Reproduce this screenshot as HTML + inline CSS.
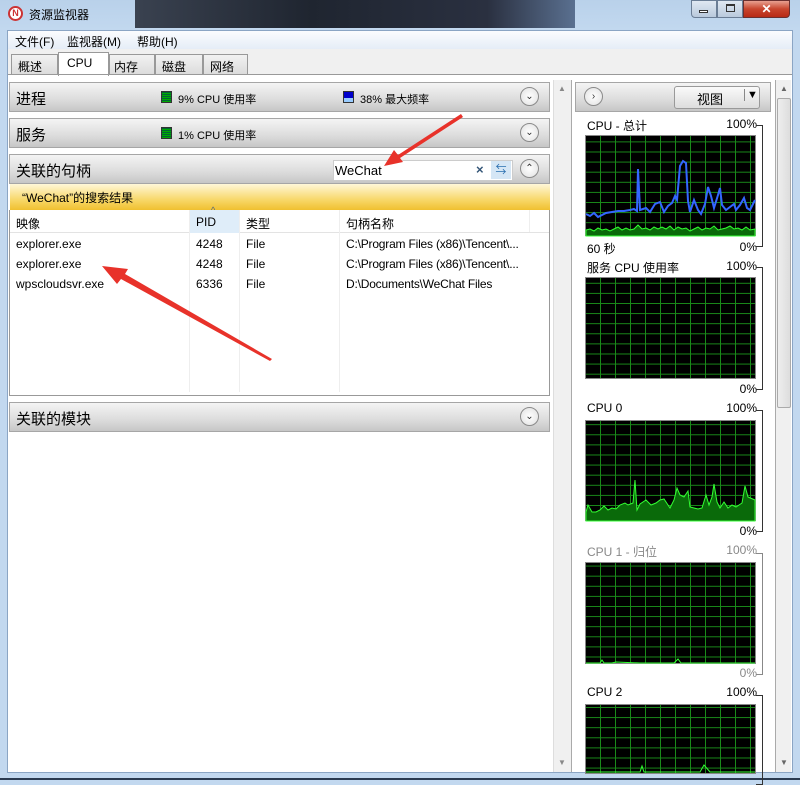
<!DOCTYPE html>
<html><head><meta charset="utf-8"><style>
*{box-sizing:border-box;margin:0;padding:0}
body{width:800px;height:780px;position:relative;overflow:hidden;background:#c2d8ef;font-family:"Liberation Sans","Noto Sans CJK SC",sans-serif;font-size:12px;color:#000}
.a{position:absolute}
.hdr{position:absolute;background:linear-gradient(#f4f4f4,#dcdcdc 60%,#c6c6c6);border:1px solid #a6a6a6;font-size:15px}
.hdr .t{position:absolute;left:6px;top:5px}
.chev{position:absolute;width:19px;height:19px;border-radius:50%;border:1px solid #8a8a8a;background:radial-gradient(#fff,#e0e0e0);font-size:10px;text-align:center;line-height:17px;color:#333}
.brk{position:absolute;left:756px;width:7px;border:1px solid #333;border-left:none}
</style></head><body>
<div class="a" style="left:0;top:0;width:800px;height:30px;background:linear-gradient(#b9d1ea,#c2d8ef)"></div>
<div class="a" style="left:135px;top:0;width:440px;height:28px;background:linear-gradient(90deg,#3a4250,#1f2530 40%,#2a3040 80%,#5a7090)"></div>
<div class="a" style="left:0;top:778px;width:800px;height:2px;background:#2a3a50"></div>
<div class="a" style="left:8px;top:6px;width:15px;height:15px;border-radius:50%;border:2px solid #c33;background:#fff;font-size:9px;text-align:center;line-height:11px;color:#c33;font-weight:bold">N</div>
<div class="a" style="left:29px;top:6px;font-size:12px">资源监视器</div>
<div class="a" style="left:691px;top:0;width:26px;height:18px;border:1px solid #6a7d95;border-radius:0 0 0 4px;background:linear-gradient(#dfe8f2,#b9c9dc)"></div>
<div class="a" style="left:699px;top:10px;width:9px;height:3px;border:1px solid #333;background:#fff"></div>
<div class="a" style="left:717px;top:0;width:26px;height:18px;border:1px solid #6a7d95;background:linear-gradient(#dfe8f2,#b9c9dc)"></div>
<div class="a" style="left:726px;top:4px;width:9px;height:8px;border:1px solid #333;border-top-width:2px"></div>
<div class="a" style="left:743px;top:0;width:47px;height:18px;border:1px solid #6a3030;border-radius:0 0 4px 0;background:linear-gradient(#e8a090,#c8452e 50%,#b82a15);color:#fff;font-weight:bold;text-align:center;font-size:12px;line-height:16px">✕</div>
<div class="a" style="left:7px;top:30px;width:786px;height:743px;background:#fff;border:1px solid #8ba5c4"></div>
<div class="a" style="left:8px;top:31px;width:784px;height:18px;background:linear-gradient(#fbfcfe,#e5edf7)"></div>
<div class="a" style="left:15px;top:33px">文件(F)</div>
<div class="a" style="left:67px;top:33px">监视器(M)</div>
<div class="a" style="left:137px;top:33px">帮助(H)</div>
<div class="a" style="left:8px;top:49px;width:784px;height:26px;background:#f0f0f0"></div>
<div class="a" style="left:11px;top:54px;width:47px;height:21px;border:1px solid #999;background:linear-gradient(#f2f2f2,#dcdcdc);padding:3px 6px">概述</div>
<div class="a" style="left:58px;top:52px;width:51px;height:24px;border:1px solid #999;border-bottom:none;background:#fff;padding:3px 8px">CPU</div>
<div class="a" style="left:109px;top:54px;width:46px;height:21px;border:1px solid #999;background:linear-gradient(#f2f2f2,#dcdcdc);padding:3px 4px">内存</div>
<div class="a" style="left:155px;top:54px;width:48px;height:21px;border:1px solid #999;background:linear-gradient(#f2f2f2,#dcdcdc);padding:3px 6px">磁盘</div>
<div class="a" style="left:203px;top:54px;width:45px;height:21px;border:1px solid #999;background:linear-gradient(#f2f2f2,#dcdcdc);padding:3px 6px">网络</div>
<div class="a" style="left:8px;top:74px;width:784px;height:1px;background:#999"></div>
<div class="hdr" style="left:9px;top:82px;width:541px;height:30px"><span class="t">进程</span>
<span class="a" style="left:151px;top:8px;width:11px;height:12px;background:repeating-linear-gradient(#063 0 1px,#0a0 1px 2px);border:1px solid #333"></span><span class="a" style="left:168px;top:8px;font-size:11px">9% CPU 使用率</span>
<span class="a" style="left:333px;top:8px;width:11px;height:12px;background:linear-gradient(#00c 60%,#9cf 60%);border:1px solid #333"></span><span class="a" style="left:350px;top:8px;font-size:11px">38% 最大频率</span>
<span class="chev" style="left:510px;top:4px">&#8964;</span></div>
<div class="hdr" style="left:9px;top:118px;width:541px;height:30px"><span class="t">服务</span>
<span class="a" style="left:151px;top:8px;width:11px;height:12px;background:repeating-linear-gradient(#063 0 1px,#0a0 1px 2px);border:1px solid #333"></span><span class="a" style="left:168px;top:8px;font-size:11px">1% CPU 使用率</span>
<span class="chev" style="left:510px;top:4px">&#8964;</span></div>
<div class="hdr" style="left:9px;top:154px;width:541px;height:30px"><span class="t">关联的句柄</span>
<span class="a" style="left:323px;top:5px;width:180px;height:21px;background:#fff;border:1px solid #ccc;font-size:13px;padding:2px 1px">WeChat</span>
<span class="a" style="left:466px;top:7px;color:#357;font-weight:bold;font-size:13px">×</span>
<span class="a" style="left:481px;top:6px;width:20px;height:18px;background:#d5e6f5;color:#2a6fb0;font-size:11px;text-align:center">⇆</span>
<span class="chev" style="left:510px;top:4px">&#8963;</span></div>
<div class="a" style="left:10px;top:184px;width:540px;height:26px;background:linear-gradient(#fff7d8,#f8d86a 60%,#f0c030);padding:5px 12px;font-size:12px">“WeChat”的搜索结果</div>
<div class="a" style="left:9px;top:210px;width:541px;height:186px;border:1px solid #999;border-top:none;background:#fff"></div>
<div class="a" style="left:10px;top:210px;width:539px;height:23px;background:#fff;border-bottom:1px solid #e3e3e3"></div>
<div class="a" style="left:189px;top:210px;width:50px;height:23px;background:#dfedf9"></div>
<div class="a" style="left:189px;top:210px;width:1px;height:182px;background:#eee"></div>
<div class="a" style="left:239px;top:210px;width:1px;height:182px;background:#eee"></div>
<div class="a" style="left:339px;top:210px;width:1px;height:182px;background:#eee"></div>
<div class="a" style="left:529px;top:210px;width:1px;height:22px;background:#eee"></div>
<div class="a" style="left:16px;top:215px">映像</div><div class="a" style="left:196px;top:215px">PID</div><div class="a" style="left:211px;top:205px;font-size:9px;color:#567">^</div><div class="a" style="left:246px;top:215px">类型</div><div class="a" style="left:346px;top:215px">句柄名称</div>
<div class="a" style="left:16px;top:234px;line-height:20px">explorer.exe<br>explorer.exe<br>wpscloudsvr.exe</div>
<div class="a" style="left:196px;top:234px;line-height:20px">4248<br>4248<br>6336</div>
<div class="a" style="left:246px;top:234px;line-height:20px">File<br>File<br>File</div>
<div class="a" style="left:346px;top:234px;line-height:20px;letter-spacing:-0.2px">C:\Program Files (x86)\Tencent\...<br>C:\Program Files (x86)\Tencent\...<br>D:\Documents\WeChat Files</div>
<div class="hdr" style="left:9px;top:402px;width:541px;height:30px"><span class="t">关联的模块</span><span class="chev" style="left:510px;top:4px">&#8964;</span></div>
<div class="a" style="left:553px;top:80px;width:18px;height:692px;background:#f0f0f0;border-left:1px solid #ddd"></div>
<div class="a" style="left:558px;top:84px;font-size:8px;color:#888">▲</div>
<div class="a" style="left:558px;top:758px;font-size:8px;color:#888">▼</div>
<div class="a" style="left:571px;top:80px;width:1px;height:692px;background:#aaa"></div>
<div class="hdr" style="left:575px;top:82px;width:196px;height:30px">
<span class="chev" style="left:8px;top:4px">›</span>
<span class="a" style="left:98px;top:3px;width:86px;height:23px;border:1px solid #999;border-radius:3px;background:linear-gradient(#fafafa,#ddd);font-size:13px;padding:2px 0 0 22px">视图</span>
<span class="a" style="left:168px;top:6px;font-size:11px;border-left:1px solid #888;padding-left:2px">▼</span></div>
<div class="a" style="left:775px;top:80px;width:1px;height:692px;background:#aaa"></div>
<div class="a" style="left:776px;top:80px;width:15px;height:692px;background:#f0f0f0"></div>
<div class="a" style="left:777px;top:98px;width:14px;height:310px;background:linear-gradient(90deg,#eee,#ddd);border:1px solid #aaa;border-radius:2px"></div>
<div class="a" style="left:780px;top:84px;font-size:8px;color:#666">▲</div>
<div class="a" style="left:780px;top:758px;font-size:8px;color:#666">▼</div>
<svg class="a" style="left:0;top:0" width="800" height="780">
<defs><pattern id="gr" x="585" y="0" width="15" height="10.1" patternUnits="userSpaceOnUse"><path d="M0.5 0V11M0 0.5H15" stroke="#1a8a1a" stroke-width="1"/></pattern></defs>
<rect x="585" y="135" width="171" height="101" fill="#000"/><rect x="585" y="135" width="171" height="101" fill="url(#gr)"/>
<rect x="585" y="277" width="171" height="102" fill="#000"/><rect x="585" y="277" width="171" height="102" fill="url(#gr)"/>
<rect x="585" y="420" width="171" height="101" fill="#000"/><rect x="585" y="420" width="171" height="101" fill="url(#gr)"/>
<rect x="585" y="562" width="171" height="102" fill="#000"/><rect x="585" y="562" width="171" height="102" fill="url(#gr)"/>
<rect x="585" y="704" width="171" height="69" fill="#000"/><rect x="585" y="704" width="171" height="69" fill="url(#gr)"/>
<g fill="none" stroke="#888"><rect x="585.5" y="135.5" width="170" height="100"/><rect x="585.5" y="277.5" width="170" height="101"/><rect x="585.5" y="420.5" width="170" height="100"/><rect x="585.5" y="562.5" width="170" height="101"/><rect x="585.5" y="704.5" width="170" height="69"/></g>
<polygon fill="#0a6a0a" stroke="#3f3" stroke-width="1" points="586,236 586,230 590,229 594,231 598,228 602,230 606,229 610,231 614,229 618,227 622,230 626,228 630,230 634,229 638,225 642,229 646,228 650,230 654,227 658,229 662,227 666,229 670,226 674,230 678,227 682,229 686,228 690,231 694,229 698,227 702,230 706,228 710,229 714,226 718,230 722,229 726,228 730,226 734,229 738,228 742,230 746,227 750,230 755,229 755,236"/>
<polyline fill="none" stroke="#36f" stroke-width="2" points="586,214 590,216 594,213 598,217 602,215 606,213 612,212 618,211 624,211 630,210 634,209 637,211 638,169 640,210 643,209 646,208 650,212 655,204 660,202 664,212 668,206 672,203 675,196 677,200 680,166 683,161 686,163 688,201 690,212 694,200 698,210 701,214 705,204 708,187 711,196 714,208 718,195 720,188 722,205 726,210 730,207 734,204 736,210 740,205 744,198 747,208 750,210 755,200"/>
<polygon fill="#0a6a0a" stroke="#3f3" points="586,521 586,512 588,505 592,512 596,512 600,510 604,506 608,510 612,508 616,509 620,505 625,503 628,505 633,503 635,480 637,510 640,504 646,500 651,505 656,503 660,500 664,499 668,505 670,508 674,500 677,488 680,495 684,497 688,491 690,507 694,508 698,509 702,508 706,495 709,505 712,497 714,484 717,502 720,508 724,502 728,508 732,505 736,507 742,503 745,486 748,497 755,500 755,521"/>
<polyline fill="none" stroke="#3f3" points="586,663 600,663 602,660 604,663 612,663 616,662 640,663 674,663 678,659 681,663 755,663"/>
<polyline fill="none" stroke="#3f3" points="586,772 640,772 642,766 644,772 700,772 704,765 710,772 755,772"/>
</svg>
<div class="a" style="left:587px;top:117px;width:170px;font-size:12px">CPU - 总计<span style="float:right">100%</span></div>
<div class="a" style="left:587px;top:240px;width:170px">60 秒<span style="float:right">0%</span></div>
<div class="a" style="left:587px;top:259px;width:170px">服务 CPU 使用率<span style="float:right">100%</span></div>
<div class="a" style="left:587px;top:382px;width:170px"><span style="float:right">0%</span></div>
<div class="a" style="left:587px;top:401px;width:170px">CPU 0<span style="float:right">100%</span></div>
<div class="a" style="left:587px;top:524px;width:170px"><span style="float:right">0%</span></div>
<div class="a" style="left:587px;top:543px;width:170px;color:#888">CPU 1 - 归位<span style="float:right">100%</span></div>
<div class="a" style="left:587px;top:666px;width:170px;color:#888"><span style="float:right">0%</span></div>
<div class="a" style="left:587px;top:685px;width:170px">CPU 2<span style="float:right">100%</span></div>
<div class="brk" style="top:125px;height:122px"></div>
<div class="brk" style="top:267px;height:123px"></div>
<div class="brk" style="top:410px;height:122px"></div>
<div class="brk" style="top:553px;height:122px;border-color:#888"></div>
<div class="brk" style="top:695px;height:90px"></div>
<svg class="a" style="left:0;top:0" width="800" height="780">
<polygon fill="#e8322a" points="461,114 398,155 394,150 384,166 403,162 400,158 463,117"/>
<polygon fill="#e8322a" points="272,359 125,274 128,269 102,266 117,284 121,279 270,361"/>
</svg>
</body></html>
